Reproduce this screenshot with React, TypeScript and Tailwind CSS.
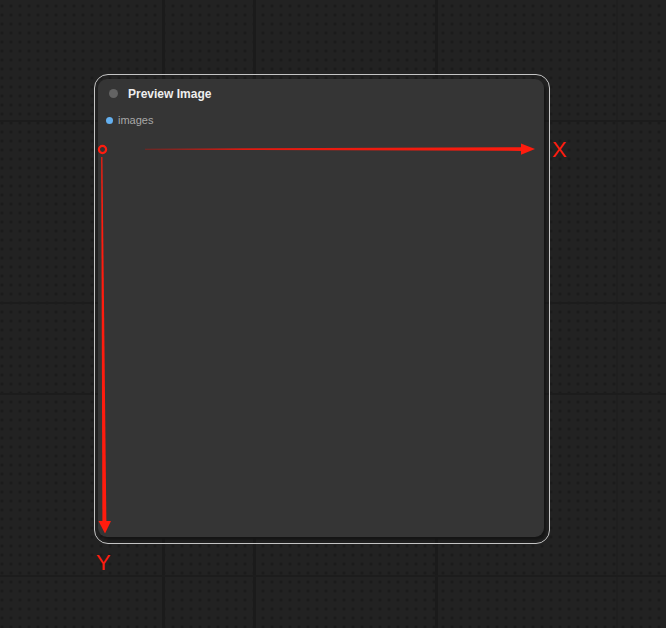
import React from 'react'

const vLines = [163, 254, 436]
const hLines = [120, 302, 393, 575]

function Annotations() {
  return (
    <svg className="absolute inset-0 pointer-events-none" width={666} height={628} viewBox="0 0 666 628">
      <defs>
        <linearGradient id="gx" x1="145" y1="0" x2="535" y2="0" gradientUnits="userSpaceOnUse">
          <stop offset="0" stopColor="#7a2420" />
          <stop offset="0.25" stopColor="#e01a10" />
          <stop offset="1" stopColor="#ff1c0e" />
        </linearGradient>
      </defs>
      {/* origin */}
      <circle cx={102.5} cy={149.5} r={3.6} fill="none" stroke="#ff1c0e" strokeWidth={2.2} />
      {/* X axis */}
      <polygon points="145,148.8 523,147.3 523,150.9 145,149.8" fill="url(#gx)" />
      <polygon points="521,143.5 535,149.1 521,154.7" fill="#ff1c0e" />
      {/* Y axis */}
      <polygon points="101.2,157 102.4,157 106.4,523 102.4,523" fill="#ff1c0e" />
      <polygon points="98.5,521 111,521 105,533.5" fill="#ff1c0e" />
      <text x={552} y={156.5} fill="#ff1c0e" fontSize={22} fontFamily="Liberation Sans, Arial, sans-serif">X</text>
      <text x={96} y={569.5} fill="#ff1c0e" fontSize={22} fontFamily="Liberation Sans, Arial, sans-serif">Y</text>
    </svg>
  )
}

export default function App() {
  return (
    <div
      className="relative w-[666px] h-[628px] overflow-hidden bg-[#222222] [background-image:radial-gradient(circle,#191919_1px,transparent_1.6px)] [background-size:9px_9px] [background-position:-2.5px_1.5px] font-['Liberation_Sans',Arial,sans-serif]"
    >
      {vLines.map((x) => (
        <div key={x} className="absolute top-0 h-full w-[3px] bg-[#1b1b1b]" style={{ left: x - 1 }} />
      ))}
      <div className="absolute top-0 left-[616px] h-full w-[2px] bg-[#1f1f1f]" />
      {hLines.map((y) => (
        <div key={y} className="absolute left-0 w-full h-[2px] bg-[#1c1c1c]" style={{ top: y }} />
      ))}

      {/* node */}
      <div className="absolute left-[94px] top-[74px] w-[456px] h-[470px] rounded-[14px] border border-[#c4c4c4] pl-[3px] pt-[4px] pr-[5px] pb-[6px]">
        <div className="h-full rounded-[9px] bg-[#353535] shadow-[2px_3px_3px_#141414]">
          <div className="h-[29px] flex items-center">
            <span className="ml-[11px] w-[9px] h-[9px] rounded-full bg-[#636363]" />
            <span className="ml-[10px] text-[12px] font-bold text-[#eeeeee] leading-none">Preview Image</span>
          </div>
          <div className="h-[25px] flex items-center">
            <span className="ml-[8px] w-[7px] h-[7px] rounded-full bg-[#64b0f0]" />
            <span className="ml-[5px] text-[11px] text-[#a8a8a8] leading-none">images</span>
          </div>
        </div>
      </div>

      <Annotations />
    </div>
  )
}
